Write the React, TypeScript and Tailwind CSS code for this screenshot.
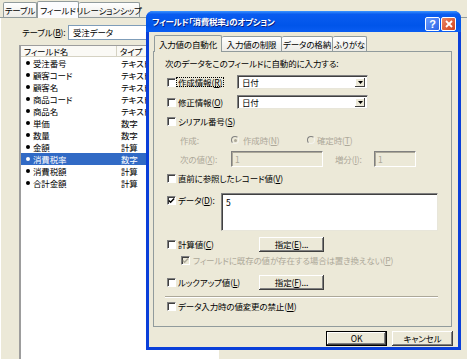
import React from "react";

const fields = [
  { name: "受注番号", type: "テキスト" },
  { name: "顧客コード", type: "テキスト" },
  { name: "顧客名", type: "テキスト" },
  { name: "商品コード", type: "テキスト" },
  { name: "商品名", type: "テキスト" },
  { name: "単価", type: "数字" },
  { name: "数量", type: "数字" },
  { name: "金額", type: "計算" },
  { name: "消費税率", type: "数字", selected: true },
  { name: "消費税額", type: "計算" },
  { name: "合計金額", type: "計算" },
];

const Key = ({ k }: { k: string }) => (
  <>
    (<span className="underline underline-offset-1">{k}</span>)
  </>
);

const CheckBox = ({ checked = false, disabled = false }: { checked?: boolean; disabled?: boolean }) => (
  <div
    className={`w-[9px] h-[9px] shrink-0 flex items-center justify-center border border-t-[#808080] border-l-[#808080] border-r-white border-b-white shadow-[inset_1px_1px_0_#404040] ${
      disabled ? "bg-[#ECE9D8]" : "bg-white"
    }`}
  >
    {checked && (
      <svg width="7" height="7" viewBox="0 0 7 7">
        <path
          d="M0.8 3.4 L2.6 5.2 L6.2 1.4"
          fill="none"
          stroke={disabled ? "#ACA899" : "#000"}
          strokeWidth="1.4"
        />
      </svg>
    )}
  </div>
);

const Radio = ({ on = false }: { on?: boolean }) => (
  <div className="w-[8px] h-[8px] shrink-0 rounded-full border border-t-[#808080] border-l-[#808080] border-r-[#f4f3ee] border-b-[#f4f3ee] bg-[#ECE9D8] flex items-center justify-center">
    {on && <div className="w-[3px] h-[3px] rounded-full bg-[#ACA899]" />}
  </div>
);

const Select = ({ value }: { value: string }) => (
  <div className="w-[131px] h-[14px] bg-white border border-t-[#808080] border-l-[#808080] border-r-[#e8e6da] border-b-[#e8e6da] shadow-[inset_1px_1px_0_#404040] flex items-center pl-[4px] pr-[2px]">
    <span className="flex-1">{value}</span>
    <div className="w-[10px] h-[9px] bg-[#ECE9D8] shadow-[inset_-1px_-1px_0_#404040,inset_1px_1px_0_#fff] flex items-center justify-center">
      <svg width="5" height="3" viewBox="0 0 5 3">
        <path d="M0 0 H5 L2.5 3 Z" fill="#000" />
      </svg>
    </div>
  </div>
);

const Button = ({ children, isDefault = false, w = 65 }: { children: React.ReactNode; isDefault?: boolean; w?: number }) => (
  <div
    className={`h-[15px] bg-[#ECE9D8] flex items-center justify-center shadow-[inset_-1px_-1px_0_#404040,inset_1px_1px_0_#fff,inset_-2px_-2px_0_#808080] ${
      isDefault ? "border border-black" : ""
    }`}
    style={{ width: w }}
  >
    {children}
  </div>
);

export default function App() {
  return (
    <div className="relative w-[467px] h-[359px] overflow-hidden whitespace-nowrap bg-[#ECE9D8] text-black text-[8.5px] leading-none tracking-[-0.15px] font-['Noto_Sans_CJK_JP',sans-serif] [font-feature-settings:'palt']">
      {/* background window: table / field tabs */}
      <div className="flex flex-col h-full">
        <div className="flex items-end h-[18px] pl-[3px] border-b border-[#919B9C]">
          <div className="w-[34px] h-[15px] border border-b-0 border-[#919B9C] rounded-t-[2px] bg-gradient-to-b from-white to-[#ECEBE6] flex items-center justify-center">
            テーブル
          </div>
          <div className="w-[42px] h-[17px] -mb-px border border-b-0 border-[#919B9C] rounded-t-[2px] bg-[#FCFCFE] flex items-center justify-center">
            フィールド
          </div>
          <div className="w-[61px] h-[15px] border border-b-0 border-l-0 border-[#919B9C] rounded-t-[2px] bg-gradient-to-b from-white to-[#ECEBE6] flex items-center justify-center">
            リレーションシップ
          </div>
        </div>
        <div className="flex-1 flex flex-col border-l border-white pl-[18px]">
          <div className="flex items-center h-[15px] mt-[7px]">
            <span className="ml-[3px] w-[46px]">
              テーブル<Key k="B" />:
            </span>
            <div className="w-[140px] h-[15px] bg-white border border-[#7F9DB9] flex items-center pl-[4px]">
              受注データ
            </div>
          </div>
          <div className="flex-1 mt-[5px] w-[200px] bg-white border-l-2 border-t border-l-[#9D9D9D] border-t-[#9D9D9D]">
            <div className="flex h-[11px] bg-[#FAF9F5] border-b border-[#D5D2C3]">
              <div className="w-[96px] pl-[3px] flex items-center border-r border-[#D5D2C3]">フィールド名</div>
              <div className="pl-[3px] flex items-center">タイプ</div>
            </div>
            {fields.map((f) => (
              <div
                key={f.name}
                className={`flex items-center h-[12px] ${f.selected ? "bg-[#316AC5] text-white" : ""}`}
              >
                <div className="w-[12px] flex justify-center pl-[1px]">
                  <div className={`w-[4px] h-[4px] rounded-full ${f.selected ? "bg-white" : "bg-black"}`} />
                </div>
                <div className="w-[88px]">{f.name}</div>
                <div>{f.type}</div>
              </div>
            ))}
          </div>
        </div>
      </div>

      {/* options dialog */}
      <div className="absolute left-[146px] top-[11px] w-[315px] h-[339px] flex flex-col rounded-t-[7px] bg-[#0A3FD9]">
        <div className="h-[21px] rounded-t-[7px] bg-[linear-gradient(to_bottom,#3C95FF_0%,#0A5CF0_15%,#0055EA_70%,#0A5DF2_100%)] flex items-center pl-[6px] pr-[5px]">
          <span className="flex-1 text-white font-bold text-[8.5px] tracking-[-0.3px] [text-shadow:1px_1px_0_#0A1E80]">
            フィールド「消費税率」のオプション
          </span>
          <div className="flex gap-[1px] self-start mt-[6px]">
            <div className="w-[15px] h-[14px] rounded-[2px] border border-white bg-[linear-gradient(135deg,#6A9BFF,#2C63E6)] flex items-center justify-center text-white font-bold text-[11px] font-['Liberation_Sans',sans-serif]">
              ?
            </div>
            <div className="w-[15px] h-[14px] rounded-[2px] border border-white bg-[linear-gradient(135deg,#E88766,#D2421B)] flex items-center justify-center">
              <svg width="8" height="8" viewBox="0 0 8 8">
                <path d="M1 1 L7 7 M7 1 L1 7" stroke="#fff" strokeWidth="1.8" />
              </svg>
            </div>
          </div>
        </div>

        <div className="flex-1 mx-[3px] mb-[3px] bg-[#ECE9D8] flex flex-col">
          {/* tabs */}
          <div className="flex items-end h-[19px] pl-[5px]">
            <div className="w-[68px] h-[17px] -mb-px z-10 border border-b-0 border-[#919B9C] rounded-t-[2px] bg-[#ECE9D8] flex items-center justify-center">
              入力値の自動化
            </div>
            <div className="w-[60px] h-[15px] border border-b-0 border-l-0 border-[#919B9C] rounded-t-[2px] bg-gradient-to-b from-white to-[#ECEBE6] flex items-center justify-center">
              入力値の制限
            </div>
            <div className="w-[51px] h-[15px] border border-b-0 border-l-0 border-[#919B9C] rounded-t-[2px] bg-gradient-to-b from-white to-[#ECEBE6] flex items-center justify-center">
              データの格納
            </div>
            <div className="w-[34px] h-[15px] border border-b-0 border-l-0 border-[#919B9C] rounded-t-[2px] bg-gradient-to-b from-white to-[#ECEBE6] flex items-center justify-center">
              ふりがな
            </div>
          </div>

          {/* tab panel */}
          <div className="ml-[4px] mr-[6px] h-[276px] border border-[#919B9C] flex flex-col">
            <div className="h-[12px] mt-[5px] pl-[11px] flex items-center">
              次のデータをこのフィールドに自動的に入力する:
            </div>

            <div className="h-[14px] mt-[6px] pl-[13px] flex items-center">
              <CheckBox />
              <div className="w-[59px] ml-[2px] flex">
                <span className="outline outline-1 outline-dotted outline-black px-[1px] -ml-[1px]">
                  作成情報<Key k="R" />
                </span>
              </div>
              <Select value="日付" />
            </div>

            <div className="h-[14px] mt-[6px] pl-[13px] flex items-center">
              <CheckBox />
              <div className="w-[59px] ml-[2px]">
                修正情報<Key k="O" />
              </div>
              <Select value="日付" />
            </div>

            <div className="h-[14px] mt-[5px] pl-[13px] flex items-center">
              <CheckBox />
              <div className="ml-[2px]">
                シリアル番号<Key k="S" />
              </div>
            </div>

            <div className="h-[14px] mt-[5px] pl-[26px] flex items-center text-[#ACA899]">
              <div className="w-[51px]">作成:</div>
              <Radio on />
              <div className="w-[64px] ml-[4px]">
                作成時<Key k="N" />
              </div>
              <Radio />
              <div className="ml-[2px]">
                確定時<Key k="T" />
              </div>
            </div>

            <div className="h-[16px] mt-[4px] pl-[26px] flex items-center text-[#ACA899]">
              <div className="w-[51px]">
                次の値<Key k="X" />:
              </div>
              <div className="w-[92px] h-[16px] border border-t-[#808080] border-l-[#808080] border-r-white border-b-white shadow-[inset_1px_1px_0_#ACA899] flex items-center pl-[3px]">
                1
              </div>
              <div className="w-[39px] ml-[12px]">
                増分<Key k="I" />:
              </div>
              <div className="w-[42px] h-[16px] border border-t-[#808080] border-l-[#808080] border-r-white border-b-white shadow-[inset_1px_1px_0_#ACA899] flex items-center pl-[3px]">
                1
              </div>
            </div>

            <div className="h-[14px] mt-[4px] pl-[13px] flex items-center">
              <CheckBox />
              <div className="ml-[2px]">
                直前に参照したレコード値<Key k="V" />
              </div>
            </div>

            <div className="h-[38px] mt-[8px] pl-[13px] flex items-start">
              <div className="flex items-center h-[14px]">
                <CheckBox checked />
                <div className="w-[43px] ml-[2px]">
                  データ<Key k="D" />:
                </div>
              </div>
              <div className="w-[217px] h-[38px] bg-white border border-t-[#808080] border-l-[#808080] border-r-[#e8e6da] border-b-[#e8e6da] shadow-[inset_1px_1px_0_#404040] pl-[4px] pt-[4px]">
                5
              </div>
            </div>

            <div className="h-[14px] mt-[6px] pl-[13px] flex items-center">
              <CheckBox />
              <div className="w-[81px] ml-[2px]">
                計算値<Key k="C" />
              </div>
              <Button>
                指定<Key k="E" />...
              </Button>
            </div>

            <div className="h-[12px] mt-[3px] pl-[27px] flex items-center text-[#ACA899]">
              <CheckBox checked disabled />
              <div className="ml-[3px]">
                フィールドに既存の値が存在する場合は置き換えない<Key k="P" />
              </div>
            </div>

            <div className="h-[14px] mt-[9px] pl-[13px] flex items-center">
              <CheckBox />
              <div className="w-[81px] ml-[2px]">
                ルックアップ値<Key k="L" />
              </div>
              <Button>
                指定<Key k="F" />...
              </Button>
            </div>

            <div className="ml-[11px] w-[273px] mt-[7px] border-t border-b border-t-[#ACA899] border-b-white" />

            <div className="h-[14px] mt-[1px] pl-[13px] flex items-center">
              <CheckBox />
              <div className="ml-[2px]">
                データ入力時の値変更の禁止<Key k="M" />
              </div>
            </div>
          </div>

          {/* buttons */}
          <div className="flex justify-end gap-[5px] mt-[4px] pr-[5px]">
            <Button isDefault w={61}>
              OK
            </Button>
            <Button w={61}>キャンセル</Button>
          </div>
        </div>
      </div>
    </div>
  );
}
